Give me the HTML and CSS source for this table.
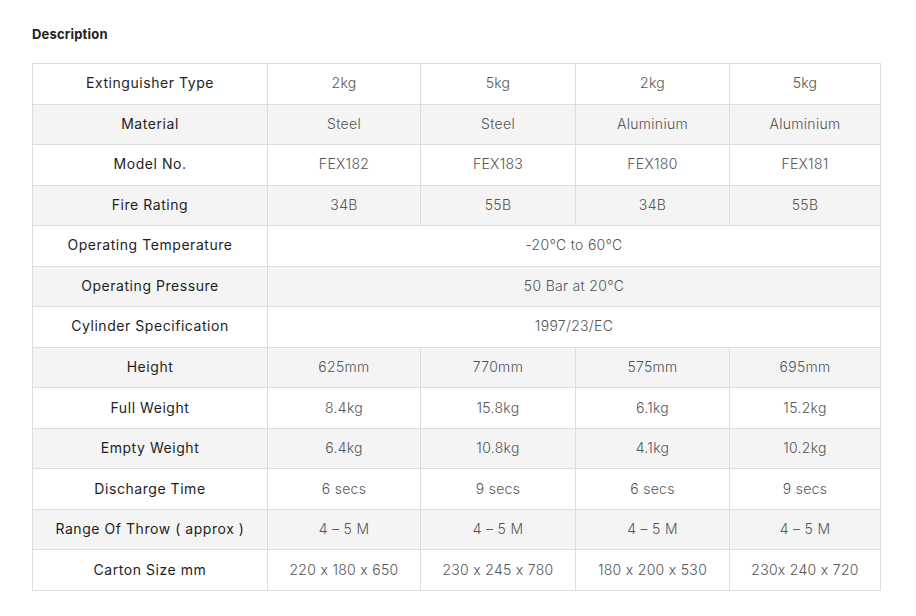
FILE: index.html
```html
<!DOCTYPE html>
<html>
<head>
<meta charset="utf-8">
<link rel="stylesheet" href="styles.css">
</head>
<body>
<div class="page">
  <h3 class="title">Description</h3>
  <table class="spec">
    <colgroup>
      <col class="c0"><col class="c1"><col class="c2"><col class="c3"><col class="c4">
    </colgroup>
    <tbody>
      <tr><th>Extinguisher Type</th><td>2kg</td><td>5kg</td><td>2kg</td><td>5kg</td></tr>
      <tr><th>Material</th><td>Steel</td><td>Steel</td><td>Aluminium</td><td>Aluminium</td></tr>
      <tr><th>Model No.</th><td>FEX182</td><td>FEX183</td><td>FEX180</td><td>FEX181</td></tr>
      <tr><th>Fire Rating</th><td>34B</td><td>55B</td><td>34B</td><td>55B</td></tr>
      <tr><th>Operating Temperature</th><td colspan="4">-20°C to 60°C</td></tr>
      <tr><th>Operating Pressure</th><td colspan="4">50 Bar at 20°C</td></tr>
      <tr><th>Cylinder Specification</th><td colspan="4">1997/23/EC</td></tr>
      <tr><th>Height</th><td>625mm</td><td>770mm</td><td>575mm</td><td>695mm</td></tr>
      <tr><th>Full Weight</th><td>8.4kg</td><td>15.8kg</td><td>6.1kg</td><td>15.2kg</td></tr>
      <tr><th>Empty Weight</th><td>6.4kg</td><td>10.8kg</td><td>4.1kg</td><td>10.2kg</td></tr>
      <tr><th>Discharge Time</th><td>6 secs</td><td>9 secs</td><td>6 secs</td><td>9 secs</td></tr>
      <tr><th>Range Of Throw ( approx )</th><td>4 – 5 M</td><td>4 – 5 M</td><td>4 – 5 M</td><td>4 – 5 M</td></tr>
      <tr><th>Carton Size mm</th><td>220 x 180 x 650</td><td>230 x 245 x 780</td><td>180 x 200 x 530</td><td>230x 240 x 720</td></tr>
    </tbody>
  </table>
</div>
</body>
</html>
```

FILE: styles.css
```css
html, body {
  margin: 0;
  padding: 0;
  background: #fff;
}
body {
  font-family: Inter, "Open Sans", "Liberation Sans", sans-serif;
  color: #333;
}
.page {
  padding: 26px 36px 0 32px;
}
.title {
  margin: 0 0 20px 0;
  font-size: 13px;
  font-weight: 700;
  color: #222;
  line-height: 17px;
  letter-spacing: 0.2px;
}
.spec {
  width: 848px;
  border-collapse: collapse;
  table-layout: fixed;
}
.c0 { width: 235px; }
.c1 { width: 153px; }
.c2 { width: 155px; }
.c3 { width: 154px; }
.c4 { width: 151px; }
.spec th, .spec td {
  border: 1px solid #ddd;
  text-align: center;
  height: 40.54px;
  padding: 0 4px 1px;
  box-sizing: border-box;
  font-size: 14px;
  line-height: 18px;
  letter-spacing: 0.3px;
}
.spec th {
  font-weight: 400;
  color: #1e1e1e;
  letter-spacing: 0.55px;
}
.spec td {
  font-weight: 300;
  color: #555;
}
.spec tr:nth-child(even) th,
.spec tr:nth-child(even) td {
  background: #f4f4f4;
}
```
